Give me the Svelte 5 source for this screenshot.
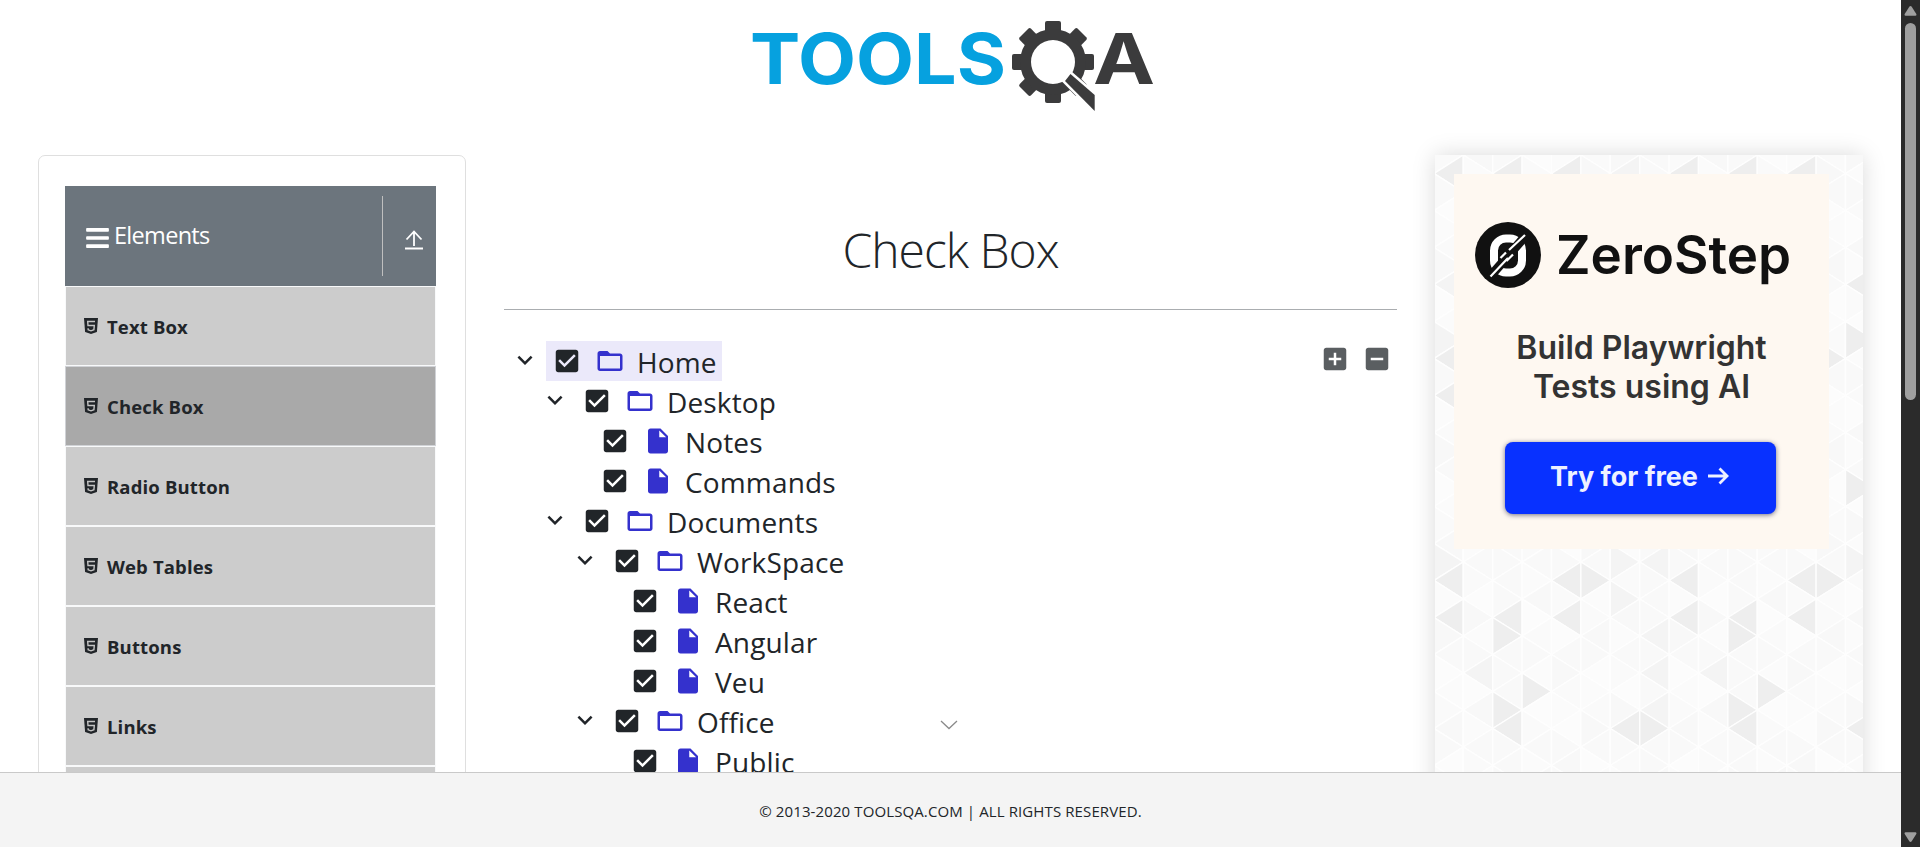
<script>
  const menu = ['Text Box', 'Check Box', 'Radio Button', 'Web Tables', 'Buttons', 'Links'];
  const active = 'Check Box';

  const tree = [
    { label: 'Home', depth: 0, folder: true },
    { label: 'Desktop', depth: 1, folder: true },
    { label: 'Notes', depth: 2 },
    { label: 'Commands', depth: 2 },
    { label: 'Documents', depth: 1, folder: true },
    { label: 'WorkSpace', depth: 2, folder: true },
    { label: 'React', depth: 3 },
    { label: 'Angular', depth: 3 },
    { label: 'Veu', depth: 3 },
    { label: 'Office', depth: 2, folder: true },
    { label: 'Public', depth: 3 }
  ];

  // Triangle mosaic behind the advert: column and half-row of each shaded tile.
  const dark = new Set([
    '0,23', '4,23', '5,23', '8,23', '12,23', '13,23', '0,25', '2,25', '4,25', '8,25', '10,25', '12,25',
    '2,26', '10,26', '3,29', '11,29', '2,30', '10,30', '2,31', '10,31', '6,31', '7,31', '14,31',
    '0,1', '2,1', '4,1', '8,1', '10,1', '12,1', '14,7', '14,10', '13,11', '0,11', '0,13', '14,18'
  ]);
  const mid = new Set(['6,22', '7,22', '14,22', '7,26', '1,28', '7,28', '9,28', '7,30', '6,1', '0,22', '6,24', '0,7', '0,10']);
  const soft = ['#fcfcfc', '#fafafa', '#f9f9f9', '#fbfbfb', '#f8f8f8'];
  const W = 29.4;
  const H = 18.5;
  const tiles = [];
  for (let c = 0; c < 15; c++) {
    for (let m = -1; m < 35; m++) {
      const x = -1.1 + c * W;
      const y = m * H;
      const left = (c + m) % 2 !== 0;
      const points = left
        ? `${x},${y} ${x + W},${y - H} ${x + W},${y + H}`
        : `${x + W},${y} ${x},${y - H} ${x},${y + H}`;
      const key = `${c},${m}`;
      const fill = dark.has(key) ? '#eeeeee' : mid.has(key) ? '#f4f4f4' : soft[((c % 8) * 7 + (m + 2) * 3 + (c % 8) * (m + 1)) % 5];
      tiles.push({ points, fill });
    }
  }
  const teeth = [0, 45, 90, 135, 180, 225, 270, 315];
</script>

<div class="window">
  <div class="page">
    <div class="scroll">
      <header>
        <svg class="logo" width="402" height="96" viewBox="752 18 402 96">
          <text class="word" x="750" y="84" textLength="256" lengthAdjust="spacingAndGlyphs" fill="#06a1df">TOOLS</text>
          <g fill="#3b3b3c">
            {#each teeth as a}
              <path d="M1045 32V23q0-2 2-2h12q2 0 2 2v9z" transform="rotate({a} 1053 62)" />
            {/each}
            <path fill-rule="evenodd" d="M1053 29a33 33 0 1 0 0 66a33 33 0 1 0 0-66zM1053 40a22 22 0 1 1 0 44a22 22 0 1 1 0-44z" />
            <path d="M1070.500 74L1094.700 95V111L1065 81z" stroke="#fff" stroke-width="5" />
            <path d="M1070.500 74L1094.700 95V111L1065 81z" />
            <text class="word" x="1093" y="84" textLength="62" lengthAdjust="spacingAndGlyphs">A</text>
          </g>
        </svg>
      </header>

      <div class="columns">
        <nav class="card">
          <div class="group">
            <svg width="23" height="26" viewBox="0 0 448 512" fill="#fff"><path d="M16 132h416c8.800 0 16-7.200 16-16V76c0-8.800-7.200-16-16-16H16C7.200 60 0 67.200 0 76v40c0 8.800 7.200 16 16 16zm0 160h416c8.800 0 16-7.200 16-16v-40c0-8.800-7.200-16-16-16H16c-8.800 0-16 7.200-16 16v40c0 8.800 7.200 16 16 16zm0 160h416c8.800 0 16-7.200 16-16v-40c0-8.800-7.200-16-16-16H16c-8.800 0-16 7.200-16 16v40c0 8.800 7.200 16 16 16z" /></svg>
            <span class="group-name">Elements</span>
            <span class="rule"></span>
            <svg class="up" width="18" height="20" viewBox="0 0 18 20" fill="none" stroke="#fff" stroke-width="1.800"><path d="M9 16V2M1.500 9.500L9 1.500l7.500 8" /><path d="M0 18.500h18" stroke-width="2" /></svg>
          </div>
          <ul>
            {#each menu as item}
              <li class:active={item === active}>
                <svg width="14" height="16" viewBox="0 0 14 16"><path fill="#212529" d="M0 0h14l-1.100 14L7 16l-5.900-2z" /><path fill="none" stroke="#c4c4c4" stroke-width="1.400" d="M11 3.500H3.700l.3 4h6.300l-.4 4.200L7 12.800l-2.800-1-.1-1.600" /></svg>
                <span>{item}</span>
              </li>
            {/each}
            <li></li>
          </ul>
        </nav>

        <main>
          <h1>Check Box</h1>
          <div class="tree">
            <div class="nodes">
              {#each tree as n, i}
                <div class="row" style="padding-left: {n.depth * 30 + (n.folder ? 6 : 30)}px">
                  {#if n.folder}
                    <svg class="toggle" width="30" height="30" viewBox="0 0 24 24" fill="#212529"><path d="M7.410 8.590L12 13.170l4.590-4.580L18 10l-6 6-6-6z" /></svg>
                  {/if}
                  <span class="label" class:hover={i === 0}>
                    <svg width="30" height="30" viewBox="0 0 24 24" fill="#212529"><path d="M19 3H5c-1.110 0-2 .9-2 2v14c0 1.100.89 2 2 2h14c1.110 0 2-.9 2-2V5c0-1.100-.89-2-2-2zm-9 14l-5-5 1.410-1.410L10 14.170l7.590-7.590L19 8l-9 9z" /></svg>
                    <svg class="kind" width="30" height="30" viewBox="0 0 24 24" fill="#3431cd">
                      {#if n.folder}
                        <path d="M20 6h-8l-2-2H4c-1.100 0-1.990.9-1.990 2L2 18c0 1.100.9 2 2 2h16c1.100 0 2-.9 2-2V8c0-1.100-.9-2-2-2zm0 12H4V8h16v10z" />
                      {:else}
                        <path d="M6 2c-1.100 0-2 .9-2 2v16c0 1.100.9 2 2 2h12c1.100 0 2-.9 2-2V8l-6-6H6zm7 7V3.500L18.500 9H13z" />
                      {/if}
                    </svg>
                    <span class="name">{n.label}</span>
                  </span>
                </div>
              {/each}
            </div>
            <div class="actions">
              <svg width="30" height="30" viewBox="0 0 24 24" fill="#5a5e61"><path d="M19 3H5c-1.110 0-2 .9-2 2v14c0 1.100.89 2 2 2h14c1.100 0 2-.9 2-2V5c0-1.100-.9-2-2-2zm-2 10h-4v4h-2v-4H7v-2h4V7h2v4h4v2z" /></svg>
              <svg width="30" height="30" viewBox="0 0 24 24" fill="#5a5e61"><path d="M19 3H5c-1.110 0-2 .9-2 2v14c0 1.100.89 2 2 2h14c1.100 0 2-.9 2-2V5c0-1.100-.9-2-2-2zm-2 10H7v-2h10v2z" /></svg>
            </div>
          </div>
        </main>

        <aside>
          <svg class="mosaic" width="428" height="620" viewBox="0 0 428 620">
            {#each tiles as t}
              <polygon points={t.points} fill={t.fill} stroke="#fefefe" stroke-width="1.400" />
            {/each}
          </svg>
          <div class="ad">
            <div class="brand">
              <svg width="66" height="66" viewBox="0 0 66 66">
                <circle cx="33" cy="33" r="33" fill="#111" />
                <rect x="19" y="16.500" width="28" height="34" rx="12" fill="none" stroke="#fff" stroke-width="8" />
                <path d="M13 57L53 11" stroke="#111" stroke-width="9" />
                <path d="M15.500 54.500L33 36M34 28L50 13M31.500 39L38 32.500M25.500 36L31 30.500" stroke="#fff" stroke-width="2.200" />
              </svg>
              <span>ZeroStep</span>
            </div>
            <p><span>Build Playwright</span><br /><span class="second">Tests using AI</span></p>
            <div class="cta">
              <span>Try for free</span>
              <svg width="21" height="18" viewBox="0 0 21 18" fill="none" stroke="#eef1ff" stroke-width="2.800"><path d="M0 9h19M11.500 1.500L19 9l-7.500 7.500" /></svg>
            </div>
          </div>
        </aside>
      </div>
      <svg class="more" width="18" height="10" viewBox="0 0 18 10" fill="none" stroke="#8a8a8a" stroke-width="1.300"><path d="M1 1l8 7.500L17 1" /></svg>
    </div>
    <footer><span>© 2013-2020 TOOLSQA.COM | ALL RIGHTS RESERVED.</span></footer>
  </div>
  <div class="scrollbar">
    <svg width="13" height="10" viewBox="0 0 13 10" fill="#9f9f9f"><path d="M5.300.8q1.200-1.400 2.400 0L12.300 8q.6 1.800-1 1.800H1.700Q.1 9.800.7 8z" /></svg>
    <div class="thumb"></div>
    <svg class="down" width="13" height="10" viewBox="0 0 13 10" fill="#9f9f9f"><path d="M5.300 9.200q1.200 1.400 2.400 0L12.300 2q.6-1.800-1-1.800H1.700Q.1.2.7 2z" /></svg>
  </div>
</div>

<style>
  :global(body) {
    margin: 0;
    overflow: hidden;
  }
  .window {
    display: flex;
    width: 1920px;
    height: 847px;
    background: #fff;
    color: #212529;
    font-family: 'Open Sans', 'Noto Sans', sans-serif;
  }
  svg {
    display: block;
    flex: none;
  }
  .page {
    width: 1901px;
    display: flex;
    flex-direction: column;
  }
  .scroll {
    position: relative;
    height: 772px;
    overflow: hidden;
  }
  header {
    box-sizing: border-box;
    height: 155px;
    padding: 18px 0 0 752px;
  }
  .logo {
    overflow: visible;
  }
  .word {
    font: 700 70px Inter, sans-serif;
  }
  .columns {
    display: grid;
    grid-template-columns: 428px 893px 428px;
    column-gap: 38px;
    padding-left: 38px;
  }
  .card {
    box-sizing: border-box;
    width: 428px;
    height: 900px;
    padding: 30px 29px 0 26px;
    border: 1px solid #dfdfdf;
    border-radius: 7px;
  }
  .group {
    box-sizing: border-box;
    display: flex;
    align-items: center;
    width: 371px;
    height: 100px;
    padding-left: 21px;
    background: #6c757d;
    color: #fff;
  }
  .group > svg:first-child {
    margin-top: 4px;
  }
  .group-name {
    width: 268px;
    margin-top: -2px;
    padding-left: 5px;
    font-size: 23.500px;
    letter-spacing: -0.700px;
  }
  .rule {
    width: 1px;
    height: 80px;
    background: #bfbfbf;
  }
  .up {
    margin: 8px 0 0 22px;
  }
  ul {
    width: 371px;
    margin: 0;
    padding: 0;
    list-style: none;
  }
  li {
    box-sizing: border-box;
    display: flex;
    align-items: center;
    gap: 9px;
    height: 80px;
    padding-left: 18px;
    border: 1px solid #f8f9fa;
    background: #ccc;
    font-size: 18.500px;
    font-weight: 700;
    letter-spacing: 0.150px;
  }
  li.active {
    border-color: #d0d2d6;
    background: #a9a9a9;
  }
  h1 {
    box-sizing: border-box;
    height: 155px;
    margin: 0;
    padding-top: 62px;
    border-bottom: 1px solid #aaadb0;
    font-size: 48px;
    line-height: 66px;
    font-weight: 300;
    text-align: center;
    letter-spacing: -1px;
  }
  .tree {
    display: flex;
    justify-content: space-between;
    padding: 31px 5px 0 0;
  }
  .row {
    display: flex;
    height: 40px;
  }
  .toggle {
    margin: 4px 6px 0 0;
  }
  .row .label {
    display: flex;
    padding: 0 5px 0 6px;
  }
  .label > svg {
    margin-top: 5px;
  }
  .label > .kind {
    margin-left: 12.500px;
  }
  .label.hover {
    background: #ebe9fa;
  }
  .name {
    margin-left: 12.500px;
    font-size: 28px;
    line-height: 42px;
    letter-spacing: 0.150px;
  }
  .actions {
    display: flex;
    gap: 12px;
    padding-top: 3px;
  }
  aside {
    position: relative;
    box-sizing: border-box;
    height: 900px;
    padding: 19px;
    background: #fafafa;
    box-shadow: 0 0 22px rgba(0, 0, 0, 0.15);
  }
  .mosaic {
    position: absolute;
    top: 0;
    left: 0;
  }
  .ad {
    position: relative;
    box-sizing: border-box;
    width: 375px;
    height: 375px;
    padding: 48px 0 0;
    background: #fef8f1;
    font-family: Inter, sans-serif;
  }
  .brand {
    display: flex;
    align-items: center;
    gap: 15px;
    padding-left: 21px;
    color: #111;
    font-size: 53px;
    line-height: 66px;
    font-weight: 600;
  }
  .ad p {
    margin: 40px 0 0;
    color: #333;
    font-size: 32px;
    line-height: 39px;
    font-weight: 600;
    text-align: center;
  }
  .cta {
    display: flex;
    align-items: center;
    box-sizing: border-box;
    width: 271px;
    height: 72px;
    margin: 36px 0 0 51px;
    padding: 0 0 4px 45px;
    gap: 10px;
    border-radius: 8px;
    background: #0831ff;
    box-shadow: 0 1px 5px rgba(20, 20, 60, 0.600);
    color: #eef1ff;
    font-size: 27px;
    font-weight: 700;
  }
  .more {
    position: absolute;
    left: 940px;
    top: 720px;
  }
  footer {
    box-sizing: border-box;
    display: flex;
    justify-content: center;
    height: 75px;
    padding-top: 27px;
    border-top: 1px solid #c9c9c9;
    background: #f4f4f4;
    font-size: 15px;
    line-height: 22px;
    letter-spacing: 0.110px;
  }
  .scrollbar {
    display: flex;
    flex-direction: column;
    align-items: center;
    box-sizing: border-box;
    width: 19px;
    padding: 6px 0 5px;
    background: #2b2b2b;
  }
  .thumb {
    width: 11px;
    height: 377px;
    margin-top: 7px;
    border-radius: 6px;
    background: #9f9f9f;
  }
  .down {
    margin-top: auto;
  }
</style>
